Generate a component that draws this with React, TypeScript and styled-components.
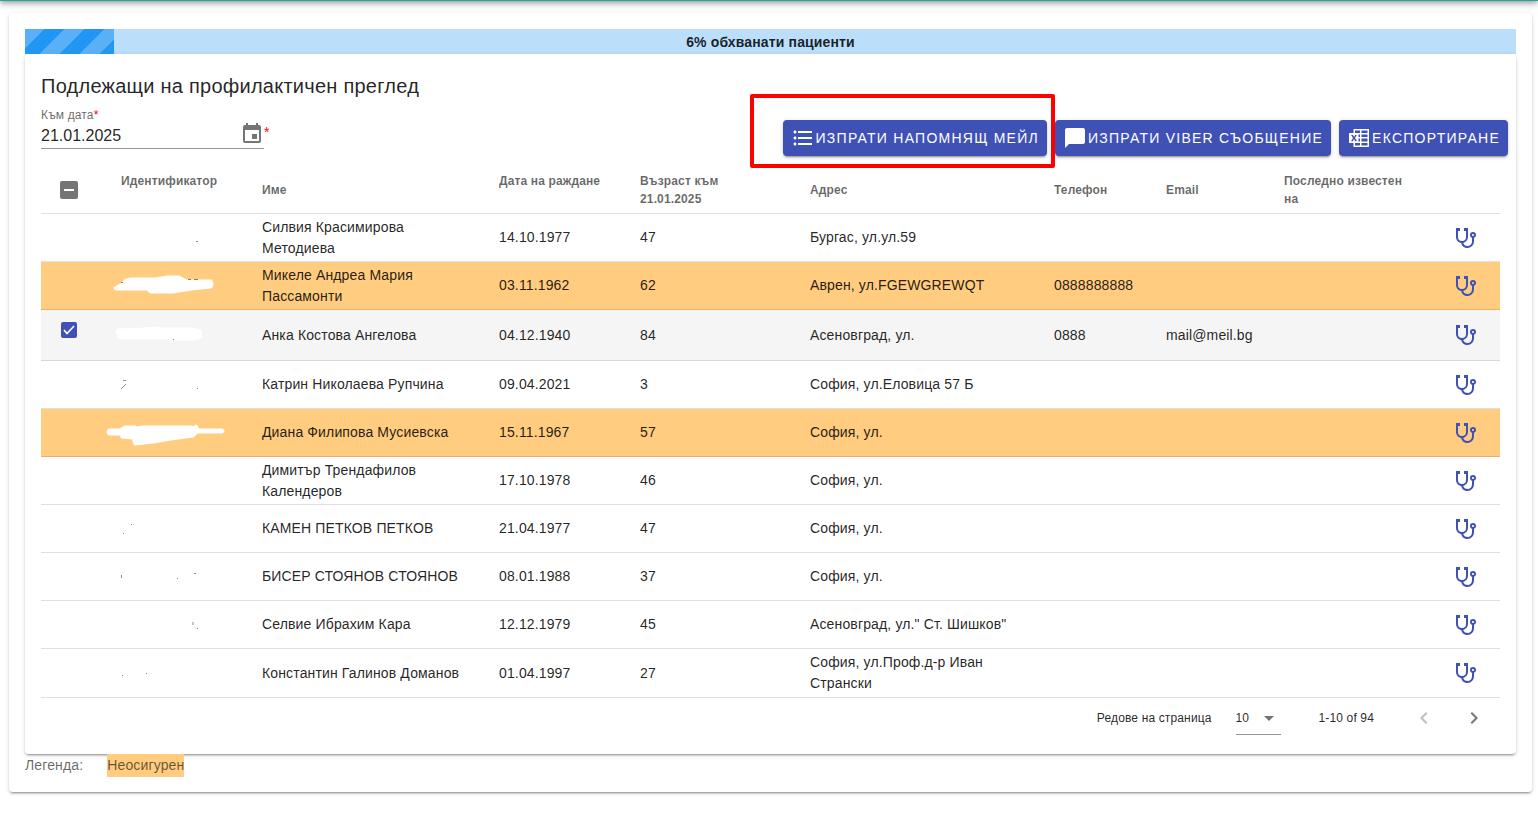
import React from "react";
import styled, { createGlobalStyle } from "styled-components";
import {
  MdArrowDropDown,
  MdChatBubble,
  MdChevronLeft,
  MdChevronRight,
  MdEvent,
  MdFormatListBulleted,
} from "react-icons/md";

const INK = "rgba(0, 0, 0, 0.87)";
const MUTED = "rgba(0, 0, 0, 0.6)";
const PRIMARY = "#3f51b5";
const WARN = "#ffcc80";
const ELEVATION =
  "0 3px 1px -2px rgba(0,0,0,.2), 0 2px 2px 0 rgba(0,0,0,.14), 0 1px 5px 0 rgba(0,0,0,.12)";

const GlobalStyle = createGlobalStyle`
  * { box-sizing: border-box; }
  body {
    margin: 0;
    background: #fff;
    color: ${INK};
    font-family: "Liberation Sans", Arial, sans-serif;
    font-size: 14px;
    line-height: 21px;
    letter-spacing: 0.01em;
  }
  button, input, select { font-family: inherit; color: inherit; }
`;

/* The bar is scrolled almost out of view: only its lower edge and shadow show. */
const TopBar = styled.header`
  height: 64px;
  margin-top: -63px;
  background: #26a69a;
  box-shadow: 0 2px 4px -1px rgba(0,0,0,.2), 0 4px 5px 0 rgba(0,0,0,.14), 0 1px 10px 0 rgba(0,0,0,.12);
`;

const Page = styled.main`
  padding: 12px 6px 20px 9px;
`;

const Card = styled.section`
  padding: 16px;
  border-radius: 4px;
  background: #fff;
  box-shadow: ${ELEVATION};
`;

const Progress = styled.div`
  display: grid;
  align-items: center;
  height: 25px;
  background: #bbdefb;
`;

const ProgressFill = styled.div`
  grid-area: 1 / 1;
  height: 25px;
  background-color: #2196f3;
  background-image: linear-gradient(
    135deg,
    rgba(255,255,255,.25) 25%, transparent 0, transparent 50%,
    rgba(255,255,255,.25) 0, rgba(255,255,255,.25) 75%, transparent 0, transparent
  );
  background-size: 40px 40px;
`;

const ProgressLabel = styled.strong`
  grid-area: 1 / 1;
  padding-top: 2px;
  text-align: center;
`;

const Title = styled.h1`
  margin: 0;
  font-size: 20px;
  line-height: 32px;
  font-weight: 400;
  letter-spacing: 0.0125em;
`;

const Toolbar = styled.div`
  display: flex;
  justify-content: space-between;
  align-items: flex-start;
  height: 64px;
`;

const Star = styled.span`
  color: #f00;
  line-height: 16px;
`;

const Field = styled.div`
  display: flex;
  flex-direction: column;
  padding-top: 4px;
`;

const FieldLabel = styled.label`
  font-size: 12px;
  line-height: 18px;
  color: ${MUTED};
`;

const FieldRow = styled.div`
  display: flex;
  align-items: flex-start;
`;

const FieldBox = styled.div`
  display: flex;
  align-items: flex-start;
  width: 223px;
  height: 25px;
  border-bottom: 1px solid rgba(0, 0, 0, 0.42);
`;

const DateInput = styled.input`
  flex: 1;
  min-width: 0;
  padding: 0;
  border: 0;
  outline: 0;
  background: none;
  font-size: 16px;
  height: 24px;
`;

const PlainButton = styled.button<{ $short?: boolean }>`
  display: flex;
  align-items: center;
  justify-content: center;
  width: 24px;
  height: ${(p) => (p.$short ? "20px" : "24px")};
  padding: 0;
  border: 0;
  background: none;
  color: #757575;
  cursor: pointer;
  & > svg { flex: none; }
  &:disabled { color: rgba(0, 0, 0, 0.26); cursor: default; }
`;

const Actions = styled.div`
  display: flex;
  gap: 8px;
  margin: 18px -8px 0 0;
`;

const ActionButton = styled.button`
  display: flex;
  align-items: center;
  gap: 1px;
  height: 36px;
  padding: 0 8px;
  border: 0;
  border-radius: 4px;
  background: ${PRIMARY};
  color: #fff;
  font-size: 14px;
  font-weight: 500;
  letter-spacing: 0.0892857143em;
  white-space: nowrap;
  box-shadow: ${ELEVATION};
  cursor: pointer;
`;

const Marked = styled.div`
  position: relative;
`;

const MarkFrame = styled.div`
  position: absolute;
  inset: -26px -8px -12px -33px;
  border: 4px solid #f00;
  border-radius: 2px;
  pointer-events: none;
  z-index: 1;
`;

const Table = styled.table`
  width: 100%;
  table-layout: fixed;
  border-collapse: separate;
  border-spacing: 0;
`;

const HeadCell = styled.th`
  height: 48px;
  padding: 0 8px;
  border-bottom: 1px solid #e0e0e0;
  text-align: left;
  font-size: 12px;
  line-height: 18px;
  font-weight: 700;
  color: ${MUTED};
`;

const HeadLines = styled.span<{ $tall?: boolean }>`
  display: block;
  min-height: ${(p) => (p.$tall ? "36px" : "0")};
  white-space: pre-line;
`;

const Row = styled.tr<{ $tone?: "warn" | "picked" }>`
  height: ${(p) => (p.$tone === "picked" ? "51px" : "48px")};
  background: ${(p) =>
    p.$tone === "warn" ? WARN : p.$tone === "picked" ? "#f5f5f5" : "transparent"};
  &:last-child { height: 49px; }
`;

const Cell = styled.td`
  padding: 2px 24px 2px 8px;
  border-bottom: 1px solid rgba(0, 0, 0, 0.12);
`;

const CheckCell = styled(Cell)`
  padding-bottom: 13px;
`;

const Check = styled.input`
  appearance: none;
  display: block;
  width: 18px;
  height: 18px;
  margin: 0 0 0 11px;
  border-radius: 2px;
  background: linear-gradient(#fff, #fff) center / 10px 2px no-repeat #757575;
  cursor: pointer;
  &:checked {
    width: 16px;
    height: 16px;
    margin-left: 12px;
    background: ${PRIMARY};
  }
`;

const CheckWrap = styled.span`
  display: grid;
  width: 40px;
  align-items: center;
  & > * { grid-area: 1 / 1; }
  & > svg { margin-left: 12px; pointer-events: none; }
`;

const IconLink = styled.button`
  display: flex;
  padding: 0;
  margin-left: -1px;
  border: 0;
  background: none;
  color: ${PRIMARY};
  cursor: pointer;
  & > svg { flex: none; }
`;

const Scribble = styled.svg`
  display: block;
  margin-left: -8px;
  overflow: visible;
`;

const Pager = styled.nav`
  display: flex;
  align-items: center;
  justify-content: flex-end;
  height: 40px;
  padding-right: 14px;
  font-size: 12px;
`;

const PageSize = styled.span`
  display: flex;
  align-items: center;
  width: 45px;
  height: 34px;
  margin: 0 38px 0 24px;
  border-bottom: 1px solid rgba(0, 0, 0, 0.42);
  & > svg { flex: none; margin-left: -24px; color: #757575; pointer-events: none; }
`;

const PageSelect = styled.select`
  appearance: none;
  flex: none;
  width: 45px;
  padding: 0;
  border: 0;
  outline: 0;
  background: none;
  font-size: 12px;
`;

const PagerButtons = styled.span`
  display: flex;
  gap: 26px;
  margin-left: 38px;
`;

const Legend = styled.footer`
  display: flex;
  align-items: flex-start;
  gap: 24px;
  height: 22px;
  line-height: 23px;
  color: ${MUTED};
`;

const LegendMark = styled.span`
  background: ${WARN};
`;

const Excel = () => (
  <svg width="24" height="24" viewBox="0 0 24 24" fill="currentColor" aria-hidden="true">
    <path
      fillRule="evenodd"
      d="M7 3H21.5Q22 3 22 3.5V20.5Q22 21 21.5 21H7Q6.5 21 6.5 20.5V17H2.5Q2 17 2 16.5V7.5Q2 7 2.5 7H6.5V3.5Q6.5 3 7 3ZM8 4.5V7H13V4.5ZM14.5 4.5V7H20.5V4.5ZM11.5 8.5V11H13V8.5ZM14.5 8.5V11H20.5V8.5ZM11.5 12.5V15.5H13V12.5ZM14.5 12.5V15.5H20.5V12.5ZM8 17V19.5H13V17ZM14.5 17V19.5H20.5V17ZM4 8.9L6 12.1L4 15.3H5.8L7 13.1L8.2 15.3H10L8 12.1L9.9 8.9H8.2L7.1 11L6 8.9Z"
    />
  </svg>
);

const Stethoscope = () => (
  <svg width="24" height="24" viewBox="0 0 24 24" fill="currentColor" aria-hidden="true">
    <path d="M19,8C19.56,8 20,8.43 20,9A1,1 0 0,1 19,10C18.43,10 18,9.55 18,9C18,8.43 18.43,8 19,8M2,2V11C2,13.96 4.19,16.5 7.14,16.91C7.76,19.92 10.42,22 13.5,22A6.5,6.5 0 0,0 20,15.5V11.81C21.16,11.39 22,10.29 22,9A3,3 0 0,0 19,6A3,3 0 0,0 16,9C16,10.29 16.84,11.4 18,11.81V15.41C18,17.91 16,19.91 13.5,19.91C11.5,19.91 9.82,18.7 9.22,16.9C12,16.3 14,13.8 14,11V2H10V5H12V11A4,4 0 0,1 8,15A4,4 0 0,1 4,11V5H6V2H2Z" />
  </svg>
);

/* Erased identifiers: white strokes (blot) and leftover specks of ink.
   Coordinates are relative to the cell's left edge, in a 120 x 30 box. */
type Erased = { blot?: string; specks?: string };

const EraseMark = ({ blot, specks }: Erased) => (
  <Scribble width="120" height="30" viewBox="0 0 120 30" aria-hidden="true">
    {blot && <path d={blot} fill="#fff" stroke="#fff" strokeWidth="3" strokeLinejoin="round" />}
    {specks && <path d={specks} fill="none" stroke="#000" strokeOpacity="0.45" />}
  </Scribble>
);

type Patient = {
  name: string;
  born: string;
  age: number;
  address: string;
  phone?: string;
  email?: string;
  tone?: "warn" | "picked";
  erased: Erased;
};

const PATIENTS: Patient[] = [
  { name: "Силвия Красимирова Методиева", born: "14.10.1977", age: 47, address: "Бургас, ул.ул.59", erased: { specks: "M83 18.5h2" } },
  {
    name: "Микеле Андреа Мария Пассамонти", born: "03.11.1962", age: 62, address: "Аврен, ул.FGEWGREWQT", phone: "0888888888", tone: "warn",
    erased: {
      blot: "M2 17L9 13L13 9L18 8H42L55 6H66L73 10L98 10L99 13L98 16L78 18L60 21H38L34 18L3 18Z",
      specks: "M8 11.5h2M75 8.5h3M81 8.5h4",
    },
  },
  {
    name: "Анка Костова Ангелова", born: "04.12.1940", age: 84, address: "Асеновград, ул.", phone: "0888", email: "mail@meil.bg", tone: "picked",
    erased: { blot: "M5 10L30 9L40 8L50 9H80L87 11L88 17L80 19H62L58 20L55 18H8L5 17L7 14L4 13Z", specks: "M60 19.5h1" },
  },
  { name: "Катрин Николаева Рупчина", born: "09.04.2021", age: 3, address: "София, ул.Еловица 57 Б", erased: { specks: "M10 10.5h3M13 14L11 16M11 16L8 19M84 18.5h1" } },
  {
    name: "Диана Филипова Мусиевска", born: "15.11.1967", age: 57, address: "София, ул.", tone: "warn",
    erased: { blot: "M-4 12H7L12 9H22L24 10L30 9H78L81 10L83 8L85 12H109L110 13L109 14H84L80 18L58 21L40 24L22 26L20 20L9 19L8 16H-4L-5 14Z" },
  },
  { name: "Димитър Трендафилов Календеров", born: "17.10.1978", age: 46, address: "София, ул.", erased: {} },
  { name: "КАМЕН ПЕТКОВ ПЕТКОВ", born: "21.04.1977", age: 47, address: "София, ул.", erased: { specks: "M10 19.5h1M18 10.5h1" } },
  { name: "БИСЕР СТОЯНОВ СТОЯНОВ", born: "08.01.1988", age: 37, address: "София, ул.", erased: { specks: "M8.5 13v3M64 16.5h1M81 11.5h2" } },
  { name: "Селвие Ибрахим Кара", born: "12.12.1979", age: 45, address: "Асеновград, ул.\" Ст. Шишков\"", erased: { specks: "M80 12v3M84 19l1 -1" } },
  { name: "Константин Галинов Доманов", born: "01.04.1997", age: 27, address: "София, ул.Проф.д-р Иван Странски", erased: { specks: "M9 17.5h1M33 15.5h1" } },
];

const COLUMNS: { label: string; width: number; tall?: boolean }[] = [
  { label: "Идентификатор", width: 141, tall: true },
  { label: "Име", width: 237 },
  { label: "Дата на раждане", width: 141, tall: true },
  { label: "Възраст към\n21.01.2025", width: 170 },
  { label: "Адрес", width: 244 },
  { label: "Телефон", width: 112 },
  { label: "Email", width: 118 },
  { label: "Последно известен\nна", width: 171 },
];

const IndeterminateCheck = () => (
  <Check type="checkbox" aria-label="Избери всички" ref={(el) => { if (el) el.indeterminate = true; }} />
);

export default function App() {
  return (
    <>
      <GlobalStyle />
      <TopBar />
      <Page>
        <Card>
          <Progress>
            <ProgressFill style={{ width: "6%" }} />
            <ProgressLabel>6% обхванати пациенти</ProgressLabel>
          </Progress>
          <Card>
            <Title>Подлежащи на профилактичен преглед</Title>
            <Toolbar>
              <Field>
                <FieldLabel htmlFor="as-of">Към дата<Star>*</Star></FieldLabel>
                <FieldRow>
                  <FieldBox>
                    <DateInput id="as-of" defaultValue="21.01.2025" />
                    <PlainButton type="button" $short aria-label="Календар"><MdEvent size={24} /></PlainButton>
                  </FieldBox>
                  <Star>*</Star>
                </FieldRow>
              </Field>
              <Actions>
                <Marked>
                  <ActionButton type="button"><MdFormatListBulleted size={24} />ИЗПРАТИ НАПОМНЯЩ МЕЙЛ</ActionButton>
                  <MarkFrame />
                </Marked>
                <ActionButton type="button"><MdChatBubble size={24} />ИЗПРАТИ VIBER СЪОБЩЕНИЕ</ActionButton>
                <ActionButton type="button"><Excel />ЕКСПОРТИРАНЕ</ActionButton>
              </Actions>
            </Toolbar>
            <Table>
              <colgroup>
                <col style={{ width: 72 }} />
                {COLUMNS.map((c) => <col key={c.label} style={{ width: c.width }} />)}
                <col style={{ width: 53 }} />
              </colgroup>
              <thead>
                <tr>
                  <HeadCell><IndeterminateCheck /></HeadCell>
                  {COLUMNS.map((c) => (
                    <HeadCell key={c.label} scope="col"><HeadLines $tall={c.tall}>{c.label}</HeadLines></HeadCell>
                  ))}
                  <HeadCell />
                </tr>
              </thead>
              <tbody>
                {PATIENTS.map((p) => (
                  <Row key={p.name} $tone={p.tone}>
                    <CheckCell>
                      {p.tone === "picked" && (
                        <CheckWrap>
                          <Check type="checkbox" defaultChecked aria-label={p.name} />
                          <svg width="16" height="16" viewBox="0 0 16 16" aria-hidden="true">
                            <path d="M3 8L6 11.5L13 4" fill="none" stroke="#fff" strokeWidth="1.6" />
                          </svg>
                        </CheckWrap>
                      )}
                    </CheckCell>
                    <Cell><EraseMark {...p.erased} /></Cell>
                    <Cell>{p.name}</Cell>
                    <Cell>{p.born}</Cell>
                    <Cell>{p.age}</Cell>
                    <Cell>{p.address}</Cell>
                    <Cell>{p.phone}</Cell>
                    <Cell>{p.email}</Cell>
                    <Cell />
                    <Cell><IconLink type="button" aria-label="Преглед"><Stethoscope /></IconLink></Cell>
                  </Row>
                ))}
              </tbody>
            </Table>
            <Pager aria-label="Страници">
              <label htmlFor="page-size">Редове на страница</label>
              <PageSize>
                <PageSelect id="page-size" defaultValue="10">
                  <option>10</option>
                  <option>25</option>
                </PageSelect>
                <MdArrowDropDown size={24} />
              </PageSize>
              <span>1-10 of 94</span>
              <PagerButtons>
                <PlainButton type="button" disabled aria-label="Предишна"><MdChevronLeft size={24} /></PlainButton>
                <PlainButton type="button" aria-label="Следваща"><MdChevronRight size={24} /></PlainButton>
              </PagerButtons>
            </Pager>
          </Card>
          <Legend>
            <span>Легенда:</span>
            <LegendMark>Неосигурен</LegendMark>
          </Legend>
        </Card>
      </Page>
    </>
  );
}
